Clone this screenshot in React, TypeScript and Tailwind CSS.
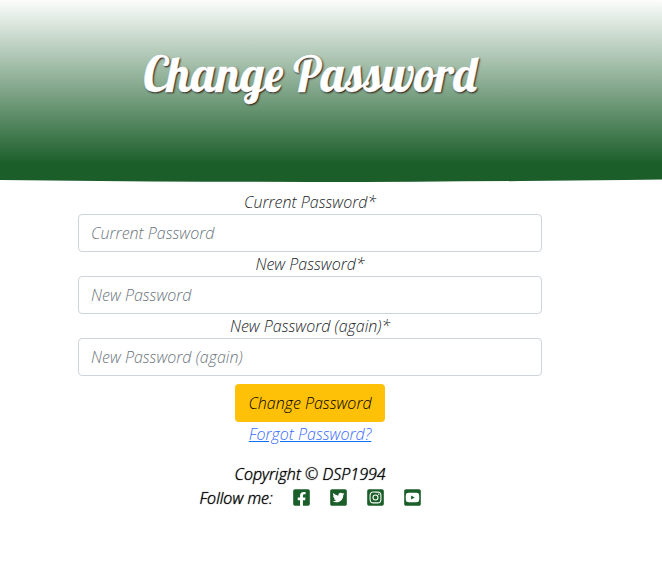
import { FaFacebookSquare, FaTwitterSquare, FaInstagramSquare, FaYoutubeSquare } from "react-icons/fa";

const fields = ["Current Password", "New Password", "New Password (again)"];
const socials = [
  { label: "Facebook", Icon: FaFacebookSquare },
  { label: "Twitter", Icon: FaTwitterSquare },
  { label: "Instagram", Icon: FaInstagramSquare },
  { label: "YouTube", Icon: FaYoutubeSquare },
];

export default function App() {
  return (
    <div className="min-h-screen overflow-hidden bg-white font-['Open_Sans',sans-serif] text-base font-light italic text-[#212529]">
      <header className="h-[182px] bg-[linear-gradient(to_bottom,#fcfdfc_0px,#1b5e2a_164px)] pt-[45px] [clip-path:ellipse(2150px_181.9px_at_310px_0px)]">
        <div className="flex w-[620px] justify-center">
          <h1 className="whitespace-nowrap font-['Lobster',cursive] text-[48px] leading-[58px] font-normal not-italic text-white [-webkit-text-stroke:0.3px_white] [text-shadow:1px_1px_2px_#200a08]">
            Change Password
          </h1>
        </div>
      </header>
      <main className="flex w-[620px] flex-col items-center px-[78px] pt-2">
        <form className="flex w-full flex-col items-center" onSubmit={(e) => e.preventDefault()}>
          {fields.map((name) => (
            <label key={name} className="flex w-full flex-col text-center leading-6">
              <span>{name}*</span>
              <input
                type="password"
                placeholder={name}
                className="h-[38px] w-full rounded border border-[#ced4da] bg-white px-3 italic leading-6 placeholder:text-[#6c757d]"
              />
            </label>
          ))}
          <button className="mt-2 h-[38px] w-[150px] rounded bg-[#ffc107] font-light italic text-black">
            Change Password
          </button>
        </form>
        <a href="#" className="leading-6 text-[#3a6dfd] underline decoration-[#0d6efd]">Forgot Password?</a>
      </main>
      <footer className="mt-4 w-[620px] text-center leading-6 text-black [text-shadow:0_0_1px_#000]">
        <p>Copyright © DSP1994</p>
        <div className="flex h-6 items-center justify-center">
          <span className="mr-5">Follow me:</span>
          <div className="-mt-[2px] flex gap-5">
            {socials.map(({ label, Icon }) => (
              <a key={label} href="#" aria-label={label} className="text-[#1b5e2a]">
                <Icon className="h-[19px] w-[17px]" />
              </a>
            ))}
          </div>
        </div>
      </footer>
    </div>
  );
}
